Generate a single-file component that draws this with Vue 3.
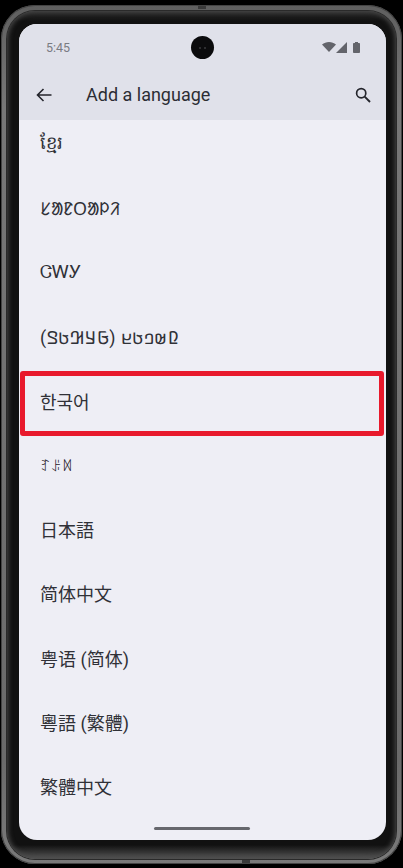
<script setup>
const languages = [
  { label: "ខ្មែរ" },
  { label: "ᱥᱟᱱᱛᱟᱞᱤ" },
  { label: "ᏣᎳᎩ" },
  { label: "𞤆𞤵𞤤𞤢𞤪 (𞤀𞤁𞤂𞤢𞤃)", wide: true },
  { label: "한국어", highlighted: true },
  { label: "ꆈꌠꉙ", small: true },
  { label: "日本語" },
  { label: "简体中文" },
  { label: "粤语 (简体)" },
  { label: "粵語 (繁體)" },
  { label: "繁體中文" },
];
</script>

<template>
  <div class="phone">
    <div class="frame">
      <span class="notch notch-top"></span>
      <span class="notch notch-bottom"></span>
      <div class="bezel">
        <div class="screen">
          <header class="appbar">
            <div class="statusbar">
              <span class="time">5:45</span>
              <span class="camera"><i></i><i></i></span>
              <span class="status-icons">
                <svg width="14" height="10" viewBox="0 0 14 10">
                  <path d="M0 2.600C2 .9 4.400 0 7 0s5 .9 7 2.600L7 10z" fill="#63646b" />
                </svg>
                <svg width="11" height="11" viewBox="0 0 11 11">
                  <path d="M11 0v11H0z" fill="#63646b" />
                </svg>
                <svg class="battery" width="7" height="11" viewBox="0 0 7 11">
                  <path d="M2 0h3v1h1.200c.4 0 .8.4.8.8v8.400c0 .4-.4.8-.8.8H.8c-.4 0-.8-.4-.8-.8V1.800c0-.4.4-.8.8-.8H2z" fill="#63646b" />
                </svg>
              </span>
            </div>
            <div class="toolbar">
              <svg class="back" width="16" height="14" viewBox="0 0 16 14">
                <path d="M15.500 7H1.500M7.500 1l-6 6 6 6" fill="none" stroke="#24252c" stroke-width="1.600" />
              </svg>
              <h1 class="title">Add a language</h1>
              <svg class="search" width="16" height="16" viewBox="0 0 16 16">
                <circle cx="6.200" cy="6.200" r="4.600" fill="none" stroke="#24252c" stroke-width="1.700" />
                <path d="M9.700 9.700l5.300 5.300" fill="none" stroke="#24252c" stroke-width="1.900" />
              </svg>
            </div>
          </header>
          <main class="list">
            <div
              v-for="lang in languages"
              :key="lang.label"
              :class="['row', { small: lang.small, wide: lang.wide }]"
            >
              {{ lang.label }}
              <span v-if="lang.highlighted" class="highlight"></span>
            </div>
          </main>
          <div class="home-bar"></div>
        </div>
      </div>
    </div>
  </div>
</template>

<style>
html,
body {
  margin: 0;
  background: #000;
}
</style>

<style scoped>
.phone {
  width: 403px;
  height: 868px;
  padding: 5px 1px 4px;
  box-sizing: border-box;
  background: #000;
}

/* gray metal edge */
.frame {
  position: relative;
  height: 100%;
  box-sizing: border-box;
  padding: 6px 6px 5px;
  border-radius: 34px;
  background: linear-gradient(#5f5f5f, #777 12%, #6a6a6a 88%, #7a7a7a);
  box-shadow: inset 0 0 0 1px #444;
}

.notch {
  position: absolute;
  height: 3px;
  width: 8px;
  background: #3a3a3a;
}

.notch-top {
  left: 197px;
  top: 1px;
}

.notch-bottom {
  left: 241px;
  bottom: 1px;
}

/* dark ring round the screen, lighter towards the bottom edge */
.bezel {
  height: 100%;
  box-sizing: border-box;
  padding: 13px 10px 19px 12px;
  border-radius: 28px;
  background: linear-gradient(#2b2b2b, #111 10px, #111 calc(100% - 14px), #565656);
  box-shadow:
    0 0 0 1px #2a2a2a,
    inset 0 0 5px 1px #4a4a4a;
}

.screen {
  position: relative;
  height: 100%;
  display: flex;
  flex-direction: column;
  overflow: hidden;
  border-radius: 18px;
  background: #eeeef5;
  font-family: Roboto, "Noto Sans CJK KR", "DejaVu Sans", sans-serif;
}

.appbar {
  position: relative;
  z-index: 1;
  flex: none;
  height: 96px;
  background: #e0e1ea;
}

.statusbar {
  position: relative;
  height: 46px;
  display: flex;
  align-items: center;
  justify-content: space-between;
  padding: 0 26px 0 27px;
}

.time {
  font-size: 12.500px;
  color: #7a7b82;
}

.status-icons {
  display: flex;
  align-items: center;
}

.battery {
  margin-left: 6px;
}

.camera {
  position: absolute;
  left: 172px;
  top: 12px;
  width: 23px;
  height: 23px;
  display: flex;
  align-items: center;
  justify-content: center;
  gap: 3px;
  border-radius: 50%;
  background: #0b0b0d;
}

.camera i {
  width: 2px;
  height: 2px;
  border-radius: 50%;
  background: #3a3a3c;
}

.toolbar {
  height: 50px;
  display: flex;
  align-items: center;
  padding: 0 15px 0 17px;
}

.title {
  flex: 1;
  margin: -1px 0 0 34px;
  font-size: 18px;
  font-weight: 400;
  color: #2c2d34;
}

.list {
  flex: 1;
  min-height: 0;
  margin-top: -8px;
}

.row {
  position: relative;
  height: 64.200px;
  display: flex;
  align-items: center;
  padding-left: 21px;
  font-size: 18px;
  color: #303137;
}

.row.small {
  font-size: 13.500px;
  color: #1f2026;
}

.row.wide {
  letter-spacing: 0.500px;
}

.highlight {
  position: absolute;
  left: 1px;
  right: 2px;
  top: 2px;
  bottom: -3px;
  border: 5.500px solid #e8192c;
  border-radius: 3px;
}

.home-bar {
  position: absolute;
  left: 135px;
  bottom: 10px;
  width: 96px;
  height: 3px;
  border-radius: 2px;
  background: #66676d;
}
</style>
